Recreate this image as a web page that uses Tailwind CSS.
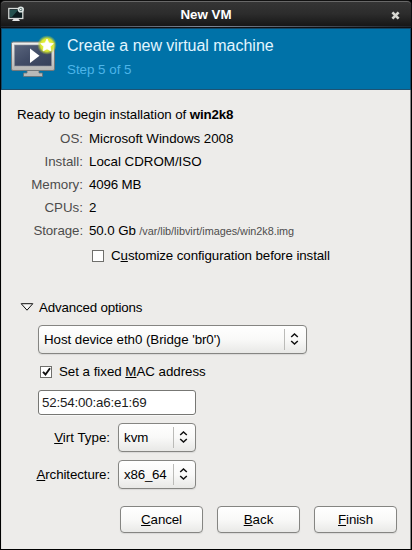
<!DOCTYPE html>
<html lang="en">
<head>
<meta charset="utf-8">
<title>New VM</title>
<script src="https://cdn.jsdelivr.net/npm/@tailwindcss/browser@4"></script>
</head>
<body class="bg-black">
<svg class="hidden">
  <symbol id="updown" viewBox="0 0 9 12"><path d="M1.200 4 4.500 1 7.800 4M1.200 8 4.500 11 7.800 8" fill="none" stroke="#111" stroke-width="1.5"/></symbol>
</svg>
<div class="w-[412px] h-[550px] bg-black flex flex-col overflow-hidden font-['Liberation_Sans',Arial,sans-serif] text-[13.33px] leading-[16px] text-black whitespace-nowrap">
  <header class="h-[28px] shrink-0 flex flex-col rounded-t-[5px] border-t border-[#111] bg-[#101010]">
    <div class="h-[25px] mx-px rounded-t-[4px] border-t border-[#686868] bg-linear-to-b from-[#353535] via-[#2c2c2c] to-[#171717] grid grid-cols-[30px_1fr_30px] items-center">
      <svg class="w-[17px] h-[16px] ml-[7px]" viewBox="0 0 17 16">
        <rect x=".8" y="2.5" width="14" height="10" fill="#0b1c1f" stroke="#d8dcda" stroke-width="1.3"/>
        <path d="M2 4h8L4 11H2z" fill="#24514f"/>
        <path d="M5.5 13h5l1.500 2H4z" fill="#e4e4e4"/>
        <circle cx="12.800" cy="3.500" r="2.300" fill="#46605f" stroke="#dce5e3" stroke-width="1.600"/>
        <circle cx="12.800" cy="3.500" r=".8" fill="#fff"/>
      </svg>
      <div class="text-center font-bold text-white text-[13.33px] pt-px">New VM</div>
      <svg class="w-[9px] h-[9px] ml-[10px] mt-[2px]" viewBox="0 0 9 9"><path d="M1.400 1.400l6.200 6.200M7.600 1.400 1.400 7.600" stroke="#d8d8d2" stroke-width="2.700"/></svg>
    </div>
    <div class="h-px mx-px bg-linear-to-r from-[#20252d] via-[#7d8798] to-[#20252d]"></div>
  </header>
  <main class="flex-1 mx-px mb-px flex flex-col bg-[#edecea] border-x border-l-[#e2e1df] border-r-[#858585]">
    <section class="h-[62px] -mx-px border border-[#124767] border-b-[#1d5374] bg-[#0072a8] flex">
      <svg class="w-[47px] h-[44px] ml-[8px] mt-[5px] shrink-0" viewBox="0 0 47 44">
        <defs>
          <radialGradient id="glow"><stop offset="0" stop-color="#f5ff3a"/><stop offset=".65" stop-color="#d8e632"/><stop offset="1" stop-color="#b5cc3c" stop-opacity="0"/></radialGradient>
          <linearGradient id="frame" x1="0" y1="0" x2="0" y2="1"><stop offset="0" stop-color="#f0f0ef"/><stop offset="1" stop-color="#b5b5b3"/></linearGradient>
          <linearGradient id="screen" x1="0" y1="0" x2="1" y2="1"><stop offset="0" stop-color="#59647c"/><stop offset=".5" stop-color="#414c66"/><stop offset="1" stop-color="#36405a"/></linearGradient>
        </defs>
        <path d="M17 36h12v3h3.500v3.500h-19V39H17z" fill="#b9bab9" stroke="#6b7072" stroke-width=".8"/>
        <rect x="1.500" y="8" width="43" height="28.500" rx="1.500" fill="url(#frame)" stroke="#74787a"/>
        <rect x="4.500" y="11" width="37" height="21" fill="url(#screen)" stroke="#8e929a" stroke-width=".6"/>
        <path d="M20 14.500v14.500l9.500-7.300z" fill="#fff"/>
        <circle cx="37" cy="11" r="9.800" fill="url(#glow)"/>
        <path d="M37 5l1.900 4 4.400.6-3.200 3 .8 4.300-3.900-2.100-3.900 2.100.8-4.300-3.200-3 4.400-.6z" fill="#fff" stroke="#fff" stroke-width=".8" stroke-linejoin="round"/>
      </svg>
      <div class="ml-[10px] pt-[7px]">
        <h1 class="text-[16px] leading-[20px] text-[#e2f6ff] tracking-[-0.020px]">Create a new virtual machine</h1>
        <p class="mt-[6px] text-[#4db5e8]">Step 5 of 5</p>
      </div>
    </section>
    <p class="mt-[17px] ml-[15px] tracking-[-0.065px]">Ready to begin installation of <b class="tracking-[-0.200px]">win2k8</b></p>
    <dl class="mt-[4.500px] grid grid-cols-[81px_1fr] gap-x-[6px] auto-rows-[23px] items-center [&_dt]:text-right [&_dt]:text-[#4d4d4d]">
      <dt>OS:</dt><dd class="tracking-[-0.040px]">Microsoft Windows 2008</dd>
      <dt>Install:</dt><dd>Local CDROM/ISO</dd>
      <dt>Memory:</dt><dd class="tracking-[-0.150px]">4096 MB</dd>
      <dt>CPUs:</dt><dd>2</dd>
      <dt class="tracking-[-0.100px]">Storage:</dt><dd class="tracking-[-0.100px]">50.0 Gb <span class="text-[10.850px] tracking-[-0.020px] text-[#4d4d4d]">/var/lib/libvirt/images/win2k8.img</span></dd>
    </dl>
    <label class="mt-[5px] ml-[90px] h-[16px] flex items-center gap-[7px]">
      <span class="size-[12px] border border-[#6f6f6c] bg-white"></span>
      <span class="tracking-[-0.090px]">C<u class="underline-offset-1">u</u>stomize configuration before install</span>
    </label>
    <div class="mt-[36px] ml-[18px] h-[16px] flex items-center gap-[5px]">
      <svg class="w-[14px] h-[8px] -mt-[2px]" viewBox="0 0 14 8"><path d="M1.200 .7h11.600L7 7.200z" fill="#f7f7f6" stroke="#111"/></svg>
      <span class="tracking-[-0.170px]">Advanced options</span>
    </div>
    <div class="mt-[9px] ml-[36px] w-[269px] h-[29px] rounded-[4px] border border-[#858582] bg-linear-to-b from-white from-0% via-[#f9f9f8] via-50% to-[#e8e8e6] flex items-center pl-[5px] shadow-[0_1px_1px_#d9d9d7]">
      <span class="flex-1 pt-px tracking-[-0.060px]">Host device eth0 (Bridge 'br0')</span>
      <span class="w-px h-[21px] bg-[#bbbbb8]"></span>
      <svg class="w-[9px] h-[12px] ml-[5px] mr-[7px]"><use href="#updown"/></svg>
    </div>
    <label class="mt-[10px] ml-[38px] h-[16px] flex items-center gap-[7px]">
      <span class="size-[12px] border border-[#6f6f6c] bg-white flex items-center justify-center"><svg class="w-[9px] h-[9px]" viewBox="0 0 9 9"><path d="M1 4.800 3.500 7.500 8 1.200" fill="none" stroke="#111" stroke-width="1.900"/></svg></span>
      <span class="tracking-[-0.030px]">Set a fixed <u class="underline-offset-1">M</u>AC address</span>
    </label>
    <div class="mt-[10px] ml-[36px] w-[158px] h-[25px] rounded-[3px] border border-[#777774] bg-white px-[3px] pt-px flex items-center text-[#1b1b1b] tracking-[-0.180px] shadow-[0_1px_0_#f8f8f7]">52:54:00:a6:e1:69</div>
    <div class="mt-[8px] grid grid-cols-[108px_78px] gap-x-[8px] gap-y-[8px] items-center">
      <span class="text-right pt-px"><u class="underline-offset-1">V</u>irt Type:</span>
      <div class="h-[29px] rounded-[4px] border border-[#858582] bg-linear-to-b from-white from-0% via-[#f9f9f8] via-50% to-[#e8e8e6] flex items-center pl-[5px] shadow-[0_1px_1px_#d9d9d7]">
        <span class="flex-1 pt-px">kvm</span><span class="w-px h-[21px] bg-[#bbbbb8]"></span><svg class="w-[9px] h-[12px] ml-[5px] mr-[7px]"><use href="#updown"/></svg>
      </div>
      <span class="text-right pt-px tracking-[-0.100px]"><u class="underline-offset-1">A</u>rchitecture:</span>
      <div class="h-[29px] rounded-[4px] border border-[#858582] bg-linear-to-b from-white from-0% via-[#f9f9f8] via-50% to-[#e8e8e6] flex items-center pl-[5px] shadow-[0_1px_1px_#d9d9d7]">
        <span class="flex-1 pt-px tracking-[-0.200px]">x86_64</span><span class="w-px h-[21px] bg-[#bbbbb8]"></span><svg class="w-[9px] h-[12px] ml-[5px] mr-[7px]"><use href="#updown"/></svg>
      </div>
    </div>
    <footer class="mt-auto mb-[16px] mr-[13px] flex justify-end gap-[14px]">
      <button class="w-[83px] h-[27px] rounded-[4px] border border-[#858582] bg-linear-to-b from-white via-[#f9f9f8] to-[#e9e9e7] tracking-[-0.100px] shadow-[0_1px_1px_#d9d9d7]"><u class="underline-offset-1">C</u>ancel</button>
      <button class="w-[83px] h-[27px] rounded-[4px] border border-[#858582] bg-linear-to-b from-white via-[#f9f9f8] to-[#e9e9e7] shadow-[0_1px_1px_#d9d9d7]"><u class="underline-offset-1">B</u>ack</button>
      <button class="w-[83px] h-[27px] rounded-[4px] border border-[#858582] bg-linear-to-b from-white via-[#f9f9f8] to-[#e9e9e7] tracking-[-0.100px] shadow-[0_1px_1px_#d9d9d7]"><u class="underline-offset-1">F</u>inish</button>
    </footer>
  </main>
</div>
</body>
</html>
